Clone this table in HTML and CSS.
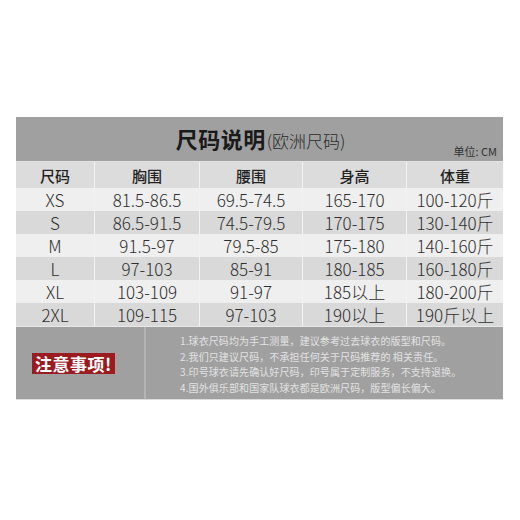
FILE: index.html
```html
<!DOCTYPE html>
<html lang="zh">
<head>
<meta charset="utf-8">
<link rel="stylesheet" href="styles.css">
</head>
<body>
<div class="chart">
  <div class="titlebar">
    <div class="title"><b>尺码说明</b><span class="sub">(欧洲尺码)</span></div>
    <div class="unit">单位: CM</div>
  </div>
  <div class="grid head">
    <div>尺码</div><div>胸围</div><div>腰围</div><div>身高</div><div>体重</div>
  </div>
  <div class="grid row light"><div>XS</div><div>81.5-86.5</div><div>69.5-74.5</div><div>165-170</div><div>100-120斤</div></div>
  <div class="grid row dark"><div>S</div><div>86.5-91.5</div><div>74.5-79.5</div><div>170-175</div><div>130-140斤</div></div>
  <div class="grid row light"><div>M</div><div>91.5-97</div><div>79.5-85</div><div>175-180</div><div>140-160斤</div></div>
  <div class="grid row dark"><div>L</div><div>97-103</div><div>85-91</div><div>180-185</div><div>160-180斤</div></div>
  <div class="grid row light"><div>XL</div><div>103-109</div><div>91-97</div><div>185以上</div><div>180-200斤</div></div>
  <div class="grid row dark"><div>2XL</div><div>109-115</div><div>97-103</div><div>190以上</div><div>190斤以上</div></div>
  <div class="notes">
    <div class="badgecell"><span class="badge">注意事项!</span></div>
    <div class="notetext">
      <p>1.球衣尺码均为手工测量，建议参考过去球衣的版型和尺码。</p>
      <p>2.我们只建议尺码，不承担任何关于尺码推荐的 相关责任。</p>
      <p>3.印号球衣请先确认好尺码，印号属于定制服务，不支持退换。</p>
      <p>4.国外俱乐部和国家队球衣都是欧洲尺码，版型偏长偏大。</p>
    </div>
  </div>
</div>
</body>
</html>
```

FILE: styles.css
```css
html, body {
  margin: 0;
  padding: 0;
  background: #ffffff;
}
body {
  width: 520px;
  height: 520px;
  font-family: "Noto Sans CJK SC", "Noto Sans", sans-serif;
}
.chart {
  position: relative;
  margin: 117px 0 0 16px;
  width: 487px;
}
.titlebar {
  height: 45px;
  background: #a0a0a0;
  display: flex;
  align-items: center;
  justify-content: center;
  position: relative;
  border-bottom: 1px solid #e4e4e4;
  box-sizing: border-box;
}
.title {
  color: #1a1a1a;
  display: flex;
  align-items: baseline;
  margin-left: 2px;
  margin-top: -2px;
}
.title b {
  font-size: 22px;
  font-weight: 700;
  letter-spacing: 0.5px;
}
.title .sub {
  font-size: 17px;
  font-weight: 300;
  color: #2a2a2a;
  margin-left: 1px;
}
.unit {
  position: absolute;
  right: 6px;
  bottom: 2px;
  font-size: 11px;
  color: #333;
}
.grid {
  display: grid;
  grid-template-columns: 79px 105px 103px 104px 96px;
}
.grid > div {
  display: flex;
  align-items: center;
  justify-content: center;
  border-right: 1px solid #f2f2f2;
}
.grid > div:last-child {
  border-right: none;
}
.head {
  height: 26px;
  background: #dcdcdc;
  font-size: 15px;
  color: #222;
  font-weight: 500;
}
.row {
  height: 23px;
  font-size: 17px;
  font-weight: 300;
  color: #2e2e2e;
  line-height: 1;
}
.light { background: #efefef; }
.dark { background: #d9d9d9; }
.notes {
  display: flex;
  height: 74px;
  background: #a0a0a0;
  border-top: 1px solid #e8e8e8;
  border-bottom: 1px solid #dcdcdc;
  box-sizing: border-box;
}
.badgecell {
  width: 130px;
  border-right: 2px solid #b4b4b4;
  display: flex;
  align-items: center;
  padding-left: 16px;
  box-sizing: border-box;
}
.badge {
  background: #9a1b20;
  color: #fff;
  font-weight: 700;
  font-size: 17px;
  line-height: 21px;
  padding: 0 3px;
  letter-spacing: 0.5px;
}
.notetext {
  padding: 6px 0 0 34px;
  color: #e2e2e2;
  font-size: 10px;
  letter-spacing: 0.1px;
}
.notetext p {
  margin: 0;
  line-height: 15.5px;
}
```
